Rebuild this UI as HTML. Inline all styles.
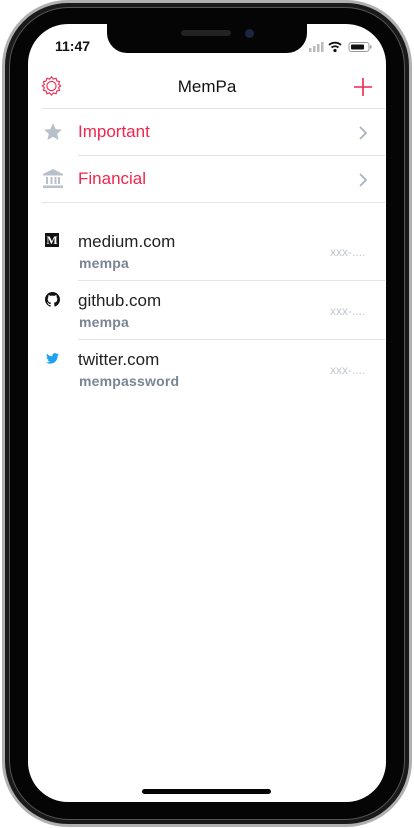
<!DOCTYPE html>
<html><head><meta charset="utf-8"><style>
*{margin:0;padding:0;box-sizing:border-box}
body{width:414px;height:828px;background:#fff;position:relative;overflow:hidden;font-family:"Liberation Sans",sans-serif}
.frame{position:absolute;left:2px;top:0;width:410px;height:827px;border-radius:66px;background:#1a1a1a;border:3px solid #b0b0b0}
.frame2{position:absolute;left:9px;top:7px;width:396px;height:813px;border-radius:60px;background:#050505;border:1px solid #555}
.screen{position:absolute;left:28px;top:24px;width:358px;height:778px;border-radius:40px;background:#fff;overflow:hidden}
.notch{position:absolute;left:107px;top:20px;width:200px;height:33px;background:#050505;border-radius:0 0 20px 20px}
.spk{position:absolute;left:181px;top:30px;width:50px;height:6px;border-radius:3px;background:#222}
.cam{position:absolute;left:245px;top:29px;width:9px;height:9px;border-radius:50%;background:#1a2540}
.t{position:absolute;white-space:nowrap}
.line{position:absolute;height:1px;background:#e1e5ea}
.home{position:absolute;left:142px;top:789px;width:129px;height:5px;border-radius:3px;background:#050505}
.m{font-size:17px;color:#222}
.s{font-size:14px;color:#7a8594;font-weight:600;letter-spacing:.2px}
</style></head><body>
<div class="frame"></div><div class="frame2"></div>
<div class="screen"></div>
<div class="notch"></div><div class="spk"></div><div class="cam"></div>
<div class="t" style="left:55px;top:38px;font-size:14px;font-weight:bold;color:#111">11:47</div>
<svg style="position:absolute;left:308px;top:40px" width="70" height="14" viewBox="0 0 70 14">
<rect x="1" y="8" width="2.5" height="4" fill="#bbb"/><rect x="5" y="6" width="2.5" height="6" fill="#bbb"/><rect x="9" y="4" width="2.5" height="8" fill="#bbb"/><rect x="13" y="2" width="2.5" height="10" fill="#bbb"/>
<path d="M21 5a9 9 0 0 1 12 0M23.5 7.5a5.5 5.5 0 0 1 7 0" stroke="#111" stroke-width="1.8" fill="none"/><circle cx="27" cy="10.5" r="1.6" fill="#111"/>
<rect x="41" y="2.5" width="20" height="9" rx="2.5" fill="none" stroke="#999"/><rect x="43" y="4.5" width="13" height="5" rx="1" fill="#111"/><rect x="62" y="5.5" width="1.5" height="3" fill="#999"/>
</svg>
<svg style="position:absolute;left:40px;top:75px" width="23" height="22" viewBox="0 0 24 24"><path d="M12 2l2 2.5 3-1 .8 3 3 .8-1 3L22 12l-2.2 1.7 1 3-3 .8-.8 3-3-1L12 22l-2-2.5-3 1-.8-3-3-.8 1-3L2 12l2.2-1.7-1-3 3-.8.8-3 3 1z" fill="none" stroke="#f0264e" stroke-width="1.2"/><circle cx="12" cy="12" r="5" fill="none" stroke="#f0264e" stroke-width="1.2"/></svg>
<div class="t" style="left:0;width:414px;text-align:center;top:77px;font-size:17px;color:#111">MemPa</div>
<svg style="position:absolute;left:353px;top:77px" width="20" height="20"><path d="M10 1v18M1 10h18" stroke="#f0264e" stroke-width="1.6"/></svg>
<div class="line" style="left:42px;width:343px;top:108px"></div>
<svg style="position:absolute;left:43px;top:122px" width="20" height="20" viewBox="0 0 24 24"><path d="M12 1.5l3.2 7 7.5.7-5.7 5 1.7 7.4L12 17.8 5.3 21.6 7 14.2 1.3 9.2l7.5-.7z" fill="#b8c0ca"/></svg>
<div class="t m" style="left:78px;top:122px;color:#f0264e">Important</div>
<svg style="position:absolute;left:358px;top:125px" width="10" height="16"><path d="M2 2l6 6-6 6" stroke="#aab2bd" stroke-width="1.8" fill="none"/></svg>
<div class="line" style="left:78px;width:307px;top:155px"></div>
<svg style="position:absolute;left:43px;top:169px" width="20" height="20" viewBox="0 0 20 20"><path d="M10 0L0 5v1.5h20V5z" fill="#b8c0ca"/><rect x="3" y="8" width="2" height="7" fill="#b8c0ca"/><rect x="7.5" y="8" width="2" height="7" fill="#b8c0ca"/><rect x="11.5" y="8" width="2" height="7" fill="#b8c0ca"/><rect x="15" y="8" width="2" height="7" fill="#b8c0ca"/><rect x="0" y="16.5" width="20" height="2.5" fill="#b8c0ca"/></svg>
<div class="t m" style="left:78px;top:169px;color:#f0264e">Financial</div>
<svg style="position:absolute;left:358px;top:172px" width="10" height="16"><path d="M2 2l6 6-6 6" stroke="#aab2bd" stroke-width="1.8" fill="none"/></svg>
<div class="line" style="left:42px;width:343px;top:202px"></div>

<div style="position:absolute;left:45px;top:233px;width:14px;height:14px;background:#111;color:#fff;font:bold 12px 'Liberation Serif',serif;text-align:center;line-height:14px">M</div>
<div class="t m" style="left:78px;top:232px">medium.com</div>
<div class="t s" style="left:79px;top:255px">mempa</div>
<div class="t" style="left:330px;top:245px;font-size:12px;color:#c2c8d0">xxx-....</div>
<div class="line" style="left:78px;width:307px;top:280px"></div>

<svg style="position:absolute;left:45px;top:292px" width="15" height="15" viewBox="0 0 16 16"><path d="M8 0C3.6 0 0 3.6 0 8c0 3.5 2.3 6.5 5.5 7.6.4.1.5-.2.5-.4v-1.4c-2.2.5-2.7-1-2.7-1-.4-.9-.9-1.2-.9-1.2-.7-.5.1-.5.1-.5.8.1 1.2.8 1.2.8.7 1.3 1.9.9 2.3.7.1-.5.3-.9.5-1.1-1.8-.2-3.6-.9-3.600-4 0-.9.3-1.6.8-2.1-.1-.2-.4-1 .1-2.1 0 0 .7-.2 2.2.8.6-.2 1.3-.3 2-.3s1.4.1 2 .3c1.5-1 2.2-.8 2.2-.8.4 1.1.2 1.9.1 2.1.5.6.8 1.3.8 2.1 0 3.1-1.9 3.7-3.6 3.9.3.3.5.8.5 1.5v2.2c0 .2.1.5.6.4C13.7 14.5 16 11.5 16 8c0-4.4-3.6-8-8-8z" fill="#111"/></svg>
<div class="t m" style="left:78px;top:291px">github.com</div>
<div class="t s" style="left:79px;top:314px">mempa</div>
<div class="t" style="left:330px;top:304px;font-size:12px;color:#c2c8d0">xxx-....</div>
<div class="line" style="left:78px;width:307px;top:339px"></div>

<svg style="position:absolute;left:46px;top:353px" width="13" height="11" viewBox="0 0 24 20"><path d="M24 2.4c-.9.4-1.8.7-2.8.8 1-.6 1.8-1.6 2.2-2.7-1 .6-2 1-3.1 1.2C19.4.7 18.1 0 16.6 0c-2.7 0-4.9 2.2-4.9 4.9 0 .4 0 .8.1 1.1C7.7 5.8 4.1 3.9 1.7.9c-.4.7-.7 1.6-.7 2.5 0 1.7.9 3.2 2.2 4.1-.8 0-1.6-.2-2.2-.6v.1c0 2.4 1.7 4.4 3.9 4.8-.4.1-.8.2-1.3.2-.3 0-.6 0-.9-.1.6 2 2.4 3.4 4.6 3.4-1.7 1.3-3.8 2.1-6.1 2.1-.4 0-.8 0-1.2-.1 2.2 1.4 4.8 2.2 7.5 2.2 9.1 0 14-7.5 14-14v-.6c1-.7 1.8-1.6 2.5-2.5z" fill="#1da1f2"/></svg>
<div class="t m" style="left:78px;top:350px">twitter.com</div>
<div class="t s" style="left:79px;top:373px">mempassword</div>
<div class="t" style="left:330px;top:363px;font-size:12px;color:#c2c8d0">xxx-....</div>

<div class="home"></div>
</body></html>
